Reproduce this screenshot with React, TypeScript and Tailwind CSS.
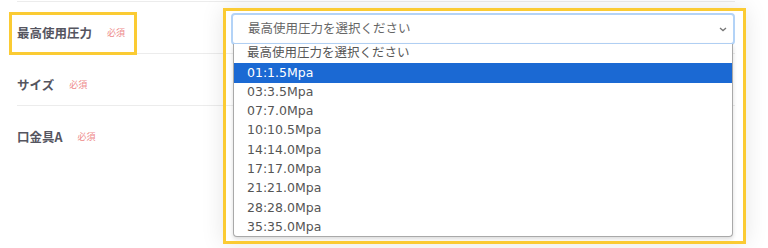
const options = [
  "最高使用圧力を選択ください",
  "01:1.5Mpa",
  "03:3.5Mpa",
  "07:7.0Mpa",
  "10:10.5Mpa",
  "14:14.0Mpa",
  "17:17.0Mpa",
  "21:21.0Mpa",
  "28:28.0Mpa",
  "35:35.0Mpa",
];

const rows = [
  { label: "最高使用圧力", focused: true },
  { label: "サイズ", focused: false },
  { label: "口金具A", focused: false },
];

function Chevron() {
  return (
    <svg width="8" height="5" viewBox="0 0 8 5" className="text-[#777]">
      <path d="M1 1l3 2.6L7 1" fill="none" stroke="currentColor" strokeWidth="1.3" />
    </svg>
  );
}

export default function App() {
  return (
    <div
      className="relative h-[248px] w-[768px] overflow-hidden bg-white"
      style={{ fontFamily: '"DejaVu Sans", "Noto Sans CJK JP", sans-serif' }}
    >
      <div className="w-[735px] pl-[17px] pt-[1px]">
        {rows.map((row) => (
          <div key={row.label} className="flex h-[52px] border-t border-[#ececec]">
            <div className="flex w-[214px] items-center gap-[15px] self-start pt-[21px]">
              <span
                className="text-[12.5px] font-bold leading-[20px] text-[#55555f]"
                style={{ fontFamily: '"Noto Sans CJK JP", sans-serif' }}
              >
                {row.label}
              </span>
              <span
                className="text-[9px] leading-[20px] text-[#ee8a8a]"
                style={{ fontFamily: '"Noto Sans CJK JP", sans-serif' }}
              >
                必須
              </span>
            </div>
            <div className="flex-1 pt-[11px]">
              {row.focused ? (
                <div className="flex h-[32px] items-center justify-between rounded-[4px] border-2 border-[#b3d3f7] bg-white pl-[15px] pr-[6px]">
                  <span className="text-[12.5px] text-[#666]">最高使用圧力を選択ください</span>
                  <Chevron />
                </div>
              ) : null}
            </div>
          </div>
        ))}
      </div>

      {/* open option list */}
      <div className="absolute left-[233px] top-[44px] h-[193px] w-[500px] overflow-hidden rounded-b-[4px] border border-t-0 border-[#a9a9a9] bg-white shadow-[0_2px_4px_rgba(0,0,0,0.15)]">
        {options.map((opt, i) => (
          <div
            key={opt}
            className={
              i === 1
                ? "flex h-[19.3px] items-center bg-[#1b69d3] pl-[13px] text-[12.5px] text-white"
                : "flex h-[19.3px] items-center pl-[13px] text-[12.5px] text-[#555]"
            }
          >
            {opt}
          </div>
        ))}
      </div>

      {/* annotation frames */}
      <div className="absolute left-[9px] top-[12px] h-[43px] w-[128px] border-[3px] border-[#fbcb33]" />
      <div className="absolute left-[223px] top-[8px] h-[236px] w-[523px] border-[3px] border-[#fbcb33] shadow-[0_0_22px_rgba(0,0,0,0.1)]" />
    </div>
  );
}
